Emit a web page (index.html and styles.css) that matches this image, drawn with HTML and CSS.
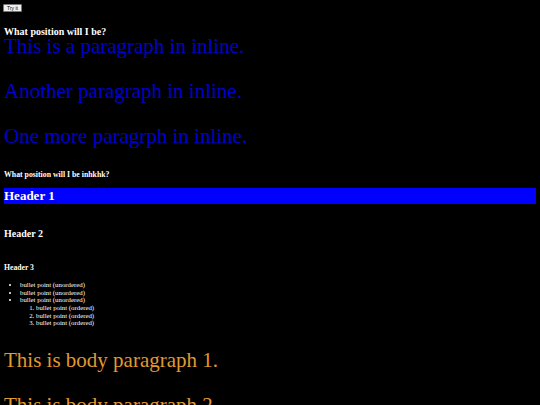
FILE: index.html
```html
<!DOCTYPE html>
<html>
<head>
<meta charset="utf-8">
<link rel="stylesheet" href="styles.css">
</head>
<body>
<div class="toolbar"><button class="try-btn">Try it</button></div>
<h2 class="float-title">What position will I be?</h2>
<p class="inline-p">This is a paragraph in inline.</p>
<p class="inline-p">Another paragraph in inline.</p>
<p class="inline-p">One more paragrph in inline.</p>
<h3 class="sub-title">What position will I be inhkhk?</h3>
<h1 class="header-1">Header 1</h1>
<h2 class="header-2">Header 2</h2>
<h3 class="header-3">Header 3</h3>
<ul class="bullets">
  <li>bullet point (unordered)</li>
  <li>bullet point (unordered)</li>
  <li>bullet point (unordered)
    <ol class="numbers">
      <li>bullet point (ordered)</li>
      <li>bullet point (ordered)</li>
      <li>bullet point (ordered)</li>
    </ol>
  </li>
</ul>
<p class="body-p">This is body paragraph 1.</p>
<p class="body-p">This is body paragraph 2.</p>
</body>
</html>
```
FILE: styles.css
```css
html {
  background: #000;
}
body {
  margin: 0;
  padding: 4px 4px 0 4px;
  background: #000;
  color: #fff;
  font-family: "Liberation Serif", "Times New Roman", serif;
}
.toolbar {
  height: 8px;
  display: flex;
}
.try-btn {
  margin: 0 0 0 -1px;
  padding: 0 2px;
  height: 8px;
  width: 19px;
  font-family: "Liberation Sans", Arial, sans-serif;
  font-size: 5px;
  line-height: 6px;
  color: #000;
  background: #efefef;
  border: 1px solid #767676;
  border-radius: 1px;
}
.float-title {
  margin: 17.1px 0 0 0;
  font-size: 10px;
  line-height: 5px;
  font-weight: bold;
}
.inline-p {
  margin: 0 0 21px 0;
  font-size: 21px;
  line-height: 24px;
  color: #0000cd;
}
.inline-p:first-of-type {
  margin-top: 0;
}
.sub-title {
  margin: 21.7px 0 0 0;
  font-size: 7.8px;
  line-height: 9px;
  font-weight: bold;
}
.header-1 {
  margin: 9px 0 0 0;
  font-size: 13px;
  line-height: 16px;
  font-weight: bold;
  background: #0000ff;
}
.header-2 {
  margin: 24px 0 0 0;
  font-size: 10px;
  line-height: 12px;
  font-weight: bold;
}
.header-3 {
  margin: 23.5px 0 0 0;
  font-size: 7.7px;
  line-height: 9px;
  font-weight: bold;
}
.bullets {
  margin: 8.7px 0 0 0;
  padding-left: 16px;
  font-size: 6.8px;
  line-height: 7.7px;
  list-style: disc;
}
.numbers {
  margin: 0;
  padding-left: 16px;
  list-style: decimal;
}
.body-p {
  margin: 21px 0 0 0;
  font-size: 21px;
  line-height: 24px;
  color: #e09a30;
}
```
